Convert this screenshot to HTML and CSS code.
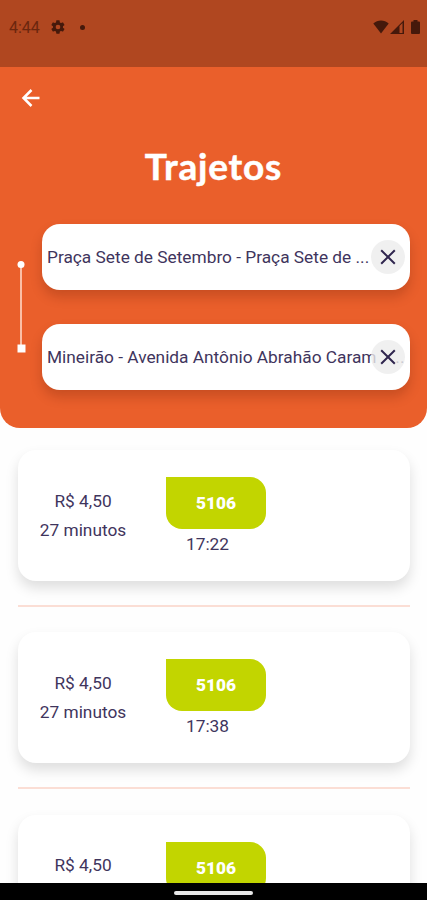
FILE: index.html
```html
<!DOCTYPE html>
<html lang="pt-BR">
<head>
    <meta charset="UTF-8">
    <meta name="viewport" content="width=device-width, initial-scale=1.0">
    <title>Trajetos</title>
    <link rel="stylesheet" href="styles.css">
</head>
<body>
    <div class="app">
        <div class="status-bar">
            <span class="clock">4:44</span>
            <svg class="gear" width="16" height="16" viewBox="0 0 24 24"><path fill-rule="evenodd" d="M19.4 13c0-.3.1-.7.1-1s0-.7-.1-1l2.1-1.600c.2-.2.300-.4.100-.7l-2-3.400c-.1-.2-.4-.3-.600-.2l-2.500 1c-.5-.4-1.100-.7-1.700-1l-.4-2.600c0-.3-.2-.5-.5-.5h-4c-.3 0-.5.2-.5.5L9 5.100c-.6.3-1.200.6-1.700 1l-2.500-1c-.2-.1-.5 0-.6.2l-2 3.400c-.1.3-.1.500.1.700L4.500 11c0 .3-.1.700-.1 1s0 .7.1 1l-2.200 1.600c-.2.2-.2.400-.1.700l2 3.400c.1.2.4.300.6.2l2.500-1c.5.4 1.100.700 1.700 1l.4 2.600c0 .3.2.5.5.5h4c.3 0 .5-.2.500-.5l.4-2.600c.6-.3 1.200-.6 1.700-1l2.500 1c.2.1.5 0 .6-.2l2-3.400c.2-.3.1-.5-.1-.7zM12 15.500a3.500 3.500 0 1 1 0-7 3.500 3.500 0 0 1 0 7z"/></svg>
            <span class="dot"></span>
            <div class="status-icons">
                <svg width="16" height="14" viewBox="0 0 16 14"><path d="M.3 3.500C4.600-.4 11.400-.4 15.700 3.500L8 13.500z"/></svg>
                <svg class="signal" width="14" height="14" viewBox="0 0 14 14"><path d="M0 14 14 0v14zM9.500 6v7h3V3z" fill-rule="evenodd"/></svg>
                <svg class="battery" width="9" height="14" viewBox="0 0 9 14"><path d="M2.500 0h4v1.500H8q1 0 1 1V13q0 1-1 1H1q-1 0-1-1V2.500q0-1 1-1h1.500z"/></svg>
            </div>
        </div>

        <header class="header">
            <button class="back-button" aria-label="Voltar">
                <svg width="20" height="20" viewBox="0 0 20 20"><path d="M18.500 10H2.500M10.500 2 2.500 10l8 8"/></svg>
            </button>
            <h1>Trajetos</h1>
            <div class="search">
                <svg class="route-line" width="10" height="94" viewBox="0 0 10 94">
                    <path d="M5 4v82" stroke="#fbbfa6" stroke-width="2"/>
                    <circle cx="5" cy="4.500" r="3.500" fill="#fff"/>
                    <path d="M1.500 84.500h8v8h-8z" fill="#fff"/>
                </svg>
                <div class="fields">
                    <div class="field">
                        <span class="field-text">Praça Sete de Setembro - Praça Sete de ...</span>
                        <button class="clear-button" aria-label="Limpar">
                            <svg width="16" height="16" viewBox="0 0 16 16"><path d="m1.200 1.200 13.600 13.600M14.800 1.200 1.200 14.800"/></svg>
                        </button>
                    </div>
                    <div class="field">
                        <span class="field-text">Mineirão - Avenida Antônio Abrahão Caram <span class="ellipsis">...</span></span>
                        <button class="clear-button" aria-label="Limpar">
                            <svg width="16" height="16" viewBox="0 0 16 16"><path d="m1.200 1.200 13.600 13.600M14.800 1.200 1.200 14.800"/></svg>
                        </button>
                    </div>
                </div>
            </div>
        </header>

        <main class="routes">
            <div class="route-card">
                <div class="info">
                    <span>R$ 4,50</span>
                    <span>27 minutos</span>
                </div>
                <div class="bus">
                    <span class="line-badge">5106</span>
                    <span class="time">17:22</span>
                </div>
            </div>
            <div class="divider"></div>
            <div class="route-card">
                <div class="info">
                    <span>R$ 4,50</span>
                    <span>27 minutos</span>
                </div>
                <div class="bus">
                    <span class="line-badge">5106</span>
                    <span class="time">17:38</span>
                </div>
            </div>
            <div class="divider"></div>
            <div class="route-card">
                <div class="info">
                    <span>R$ 4,50</span>
                </div>
                <div class="bus">
                    <span class="line-badge">5106</span>
                </div>
            </div>
        </main>

        <div class="nav-bar"><span class="handle"></span></div>
    </div>
</body>
</html>
```
FILE: styles.css
```css
* {
    box-sizing: border-box;
}
body {
    margin: 0;
    font-family: Roboto, "Liberation Sans", sans-serif;
    font-size: 17.3px;
    color: #3f355d;
    background-color: #fefefe;
}
button {
    border: none;
    padding: 0;
    background: none;
    cursor: pointer;
}
.app {
    display: flex;
    flex-direction: column;
    height: 900px;
    overflow: hidden;
}
.status-bar {
    flex: none;
    display: flex;
    align-items: center;
    height: 67px;
    padding: 0 7px 13px 9px;
    background-color: #b04720;
    color: #6b260e;
    fill: #45190b;
}
.clock {
    width: 31px;
    padding-top: 1px;
    font-size: 16px;
    white-space: nowrap;
}
.gear {
    margin-left: 10px;
}
.dot {
    width: 5px;
    height: 5px;
    margin-left: 14px;
    border-radius: 50%;
    background-color: #45190b;
}
.status-icons {
    display: flex;
    margin-left: auto;
}
.signal {
    margin-left: 1px;
}
.battery {
    margin-left: 7px;
}
.header {
    flex: none;
    display: flex;
    flex-direction: column;
    height: 361px;
    background-color: #ea5f2b;
    border-radius: 0 0 20px 20px;
}
.back-button {
    width: 20px;
    height: 20px;
    margin: 21px 0 0 21px;
}
.back-button svg {
    display: block;
    fill: none;
    stroke: #fff;
    stroke-width: 2.5;
}
h1 {
    margin: 35px 0 0;
    font-family: Lato, "Open Sans", sans-serif;
    font-size: 37px;
    font-weight: 700;
    line-height: 46px;
    letter-spacing: 0.8px;
    text-align: center;
    color: #fff;
    -webkit-text-stroke: 0.5px #fff;
}
.search {
    display: flex;
    align-items: flex-start;
    padding: 35px 17px 0 16px;
}
.route-line {
    flex: none;
    margin-top: 36px;
}
.fields {
    display: flex;
    flex-direction: column;
    gap: 34px;
    flex: 1;
    margin-left: 16px;
}
.field {
    display: grid;
    align-items: center;
    height: 66px;
    padding: 0 5px;
    border-radius: 18px;
    background-color: #fff;
    box-shadow: 0 7px 12px rgba(80, 20, 0, 0.22);
}
.field-text {
    grid-area: 1 / 1;
    white-space: nowrap;
}
.ellipsis {
    margin-left: 10px;
}
.clear-button {
    grid-area: 1 / 1;
    justify-self: end;
    display: flex;
    align-items: center;
    justify-content: center;
    width: 34px;
    height: 34px;
    border-radius: 50%;
    background-color: rgba(236, 236, 236, 0.8);
}
.clear-button svg {
    fill: none;
    stroke: #30264f;
    stroke-width: 2;
}
.routes {
    flex: 1;
    min-height: 0;
    overflow: hidden;
    padding: 22px 17px 0 18px;
}
.route-card {
    display: flex;
    height: 131px;
    padding: 27px 22px 0;
    border-radius: 18px;
    background-color: #fff;
    box-shadow: 0 7px 13px rgba(0, 0, 0, 0.13);
}
.info {
    display: flex;
    flex-direction: column;
    align-items: center;
    width: 86px;
    padding-top: 9.5px;
    line-height: 29px;
    white-space: nowrap;
}
.bus {
    width: 100px;
    margin-left: 40px;
}
.line-badge {
    display: flex;
    align-items: center;
    justify-content: center;
    height: 52px;
    border-radius: 0 16px 16px 16px;
    background-color: #c2d500;
    color: #fff;
    font-weight: 900;
}
.time {
    display: block;
    padding-left: 20px;
    line-height: 30px;
}
.divider {
    height: 2px;
    margin: 24px 0 25.4px;
    background-color: #fbded5;
}
.nav-bar {
    flex: none;
    display: flex;
    justify-content: center;
    align-items: center;
    height: 17px;
    padding-top: 2px;
    background-color: #000;
}
.handle {
    width: 79px;
    height: 4px;
    border-radius: 2px;
    background-color: #e8e8e8;
}
```
